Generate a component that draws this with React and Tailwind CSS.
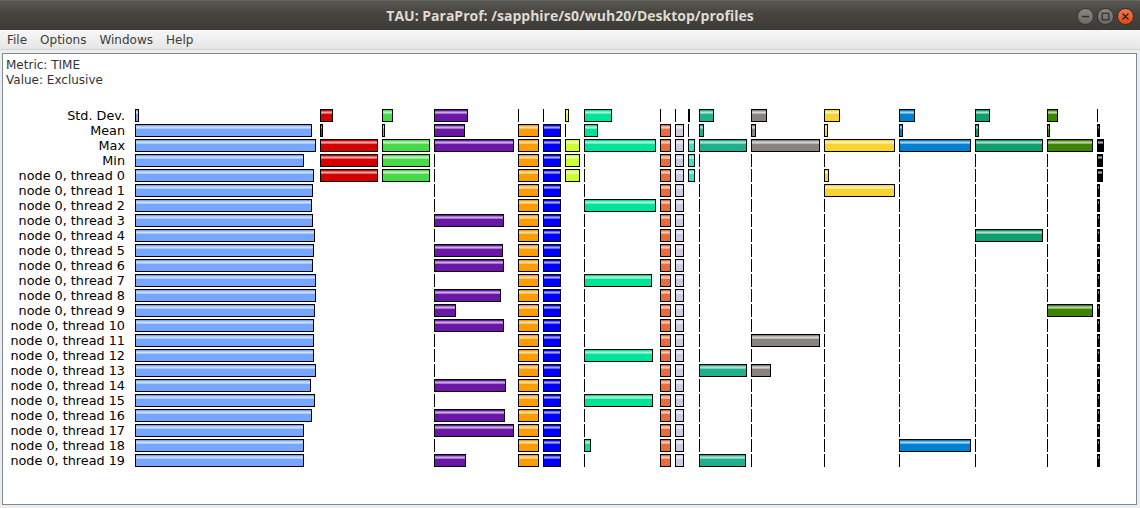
import React from 'react';

// threads 0..19 default to `def`, `extra` overrides single threads
const mk = (head, def, extra = {}) => [
  ...head,
  ...Array.from({ length: 20 }, (_, i) => (i in extra ? extra[i] : def)),
];

const labels = [
  'Std. Dev.',
  'Mean',
  'Max',
  'Min',
  ...Array.from({ length: 20 }, (_, i) => `node 0, thread ${i}`),
];

const columns = [
  { w: 181, color: 'bg-[#76a6fe]', v: [4, 177, 181, 169, 179, 178, 177, 178, 180, 179, 178, 181, 181, 180, 179, 179, 179, 181, 176, 180, 177, 169, 169, 169] },
  { w: 58, color: 'bg-[#d50000]', v: mk([13, 3, 58, 58], null, { 0: 58 }) },
  { w: 48, color: 'bg-[#48d948]', v: mk([11, 3, 48, 48], null, { 0: 48 }) },
  { w: 80, color: 'bg-[#6a17a8]', v: mk([34, 31, 80, 0], 0, { 3: 70, 5: 69, 6: 70, 8: 67, 9: 22, 10: 70, 14: 72, 16: 71, 17: 80, 19: 32 }) },
  { w: 21, color: 'bg-[#ff9c00]', v: mk([0, 21, 21, 21], 21) },
  { w: 18, color: 'bg-[#0000fe]', v: mk([0, 18, 18, 18], 18) },
  { w: 15, color: 'bg-[#ccff33]', v: mk([4, 0, 15, 15], null, { 0: 15 }) },
  { w: 72, color: 'bg-[#00e498]', v: mk([28, 14, 72, 0], 0, { 2: 72, 7: 68, 12: 69, 15: 69, 18: 7 }) },
  { w: 11, color: 'bg-[#eb6c39]', v: mk([0, 11, 11, 11], 11) },
  { w: 9, color: 'bg-[#d0c8e0]', v: mk([0, 9, 9, 9], 9) },
  { w: 7, color: 'bg-[#2ee6c6]', v: mk([2, 0, 7, 7], null, { 0: 7 }) },
  { w: 48, color: 'bg-[#20b08e]', v: mk([15, 5, 48, 0], 0, { 13: 48, 19: 47 }) },
  { w: 69, color: 'bg-[#878480]', v: mk([16, 5, 69, 0], 0, { 11: 69, 13: 20 }) },
  { w: 71, color: 'bg-[#f8d430]', v: mk([16, 4, 71, 0], 0, { 0: 5, 1: 71 }) },
  { w: 72, color: 'bg-[#0080d2]', v: mk([16, 4, 72, 0], 0, { 18: 72 }) },
  { w: 68, color: 'bg-[#109e6c]', v: mk([15, 4, 68, 0], 0, { 4: 68 }) },
  { w: 46, color: 'bg-[#3d8404]', v: mk([11, 3, 46, 0], 0, { 9: 46 }) },
  { w: 7, color: 'bg-[#000000]', v: mk([0, 3, 7, 6], 3, { 0: 6 }) },
];

const gloss =
  'bg-[linear-gradient(to_bottom,transparent_1px,rgba(255,255,255,0.4)_1px,rgba(255,255,255,0.4)_2px,rgba(255,255,255,0.65)_2px,rgba(255,255,255,0.65)_3px,rgba(255,255,255,0.4)_3px,rgba(255,255,255,0.4)_4px,transparent_4px)]';

const Bar = ({ value, color }) => {
  if (value === null) return null;
  if (value === 0) return <div className="w-px h-[13px] bg-black" />;
  return (
    <div
      className={`h-[13px] border border-black ${color} ${gloss}`}
      style={{ width: value }}
    />
  );
};

const WinButton = ({ close, children }) => (
  <div
    className={
      close
        ? 'w-[17px] h-[17px] rounded-full flex items-center justify-center border border-[#3a2a22] bg-[linear-gradient(to_bottom,#f07a4a,#df4a1c)]'
        : 'w-[17px] h-[17px] rounded-full flex items-center justify-center border border-[#34332f] bg-[linear-gradient(to_bottom,#8a8883,#6b6964)]'
    }
  >
    {children}
  </div>
);

export default function App() {
  return (
    <div className="w-[1140px] h-[508px] bg-[#ededed] flex flex-col overflow-hidden font-['DejaVu_Sans',sans-serif]">
      {/* title bar */}
      <div className="h-[30px] shrink-0 flex items-center relative bg-[linear-gradient(to_bottom,#595752,#46453f_40%,#3c3b37)] border-t border-[#66645e]">
        <div className="flex-1 text-center text-[14px] font-bold text-[#dfdbd2] font-['Open_Sans',sans-serif]">
          TAU: ParaProf: /sapphire/s0/wuh20/Desktop/profiles
        </div>
        <div className="absolute right-[6px] top-[7px] flex gap-[3px]">
          <WinButton>
            <svg width="9" height="9" viewBox="0 0 9 9">
              <path d="M1 4.5h7" stroke="#2e2d2a" strokeWidth="1.4" />
            </svg>
          </WinButton>
          <WinButton>
            <svg width="9" height="9" viewBox="0 0 9 9">
              <rect x="1.2" y="1.2" width="6.6" height="6.6" fill="none" stroke="#2e2d2a" strokeWidth="1.2" />
            </svg>
          </WinButton>
          <WinButton close>
            <svg width="9" height="9" viewBox="0 0 9 9">
              <path d="M1.5 1.5l6 6M7.5 1.5l-6 6" stroke="#3a1a10" strokeWidth="1.4" />
            </svg>
          </WinButton>
        </div>
      </div>

      {/* menu bar */}
      <div className="h-[20px] shrink-0 flex items-center gap-[13px] pl-[7px] text-[12px] text-[#3c3c3c] bg-[linear-gradient(to_bottom,#f7f7f7,#e6e6e6)] border-b border-[#d2d2d2]">
        <span>File</span>
        <span>Options</span>
        <span>Windows</span>
        <span>Help</span>
      </div>

      {/* chart panel */}
      <div className="mt-[3px] ml-[2px] w-[1135px] h-[452px] bg-white border border-[#7d8b99] flex flex-col">
        <div className="pt-[4px] pl-[3px] text-[12px] leading-[15px] text-[#333]">
          <div>Metric: TIME</div>
          <div>Value: Exclusive</div>
        </div>

        <div className="mt-[20px] flex flex-col">
          {labels.map((label, r) => (
            <div key={label} className="h-[15px] flex items-center">
              <div className="w-[132px] pr-[10px] text-right text-[12.8px] text-black whitespace-nowrap leading-[15px]">
                {label}
              </div>
              <div className="flex gap-[4px]">
                {columns.map((c, i) => (
                  <div key={i} className="flex" style={{ width: c.w }}>
                    <Bar value={c.v[r]} color={c.color} />
                  </div>
                ))}
              </div>
            </div>
          ))}
        </div>
      </div>
    </div>
  );
}
